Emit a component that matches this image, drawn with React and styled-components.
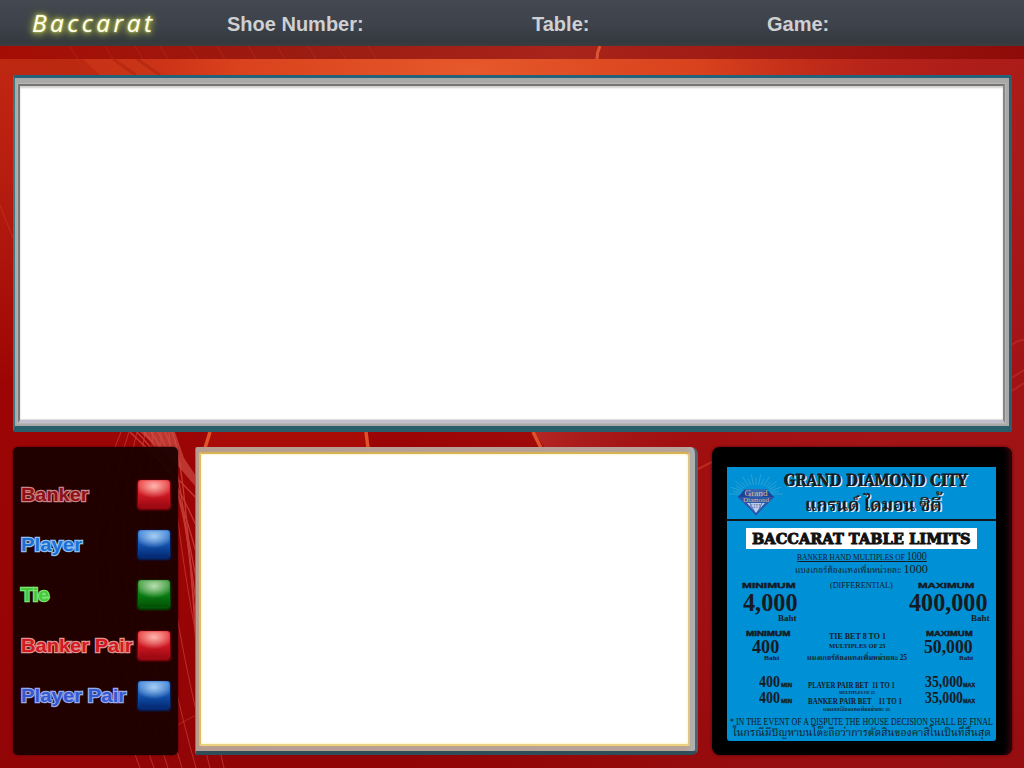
import React, { useLayoutEffect, useRef, useState } from "react";
import styled, { createGlobalStyle } from "styled-components";

const Global = createGlobalStyle`
  * { box-sizing: border-box; }
  body { margin: 0; overflow: hidden; font-family: "Liberation Sans", Arial, sans-serif; }
`;

const serif = `"Liberation Serif", "Noto Serif Thai", "Noto Sans Thai", serif`;
const slab = `"DejaVu Serif", serif`;
const sans = `"Liberation Sans", sans-serif`;

const Screen = styled.div`
  position: relative;
  isolation: isolate;
  width: 1024px;
  height: 768px;
  overflow: hidden;
  display: flex;
  flex-direction: column;
  background: #a00505;
`;

const Backdrop = styled.svg`
  position: absolute;
  inset: 0;
  z-index: -1;
`;

const Header = styled.header`
  flex: none;
  height: 46px;
  display: grid;
  grid-template-columns: 195px 305px 235px 1fr;
  padding-left: 32px;
  background: linear-gradient(#444850, #3d424b 55%, #343a3f 90%, #3c3c3e);
`;

const Logo = styled.div`
  height: 46px;
  color: #fffff0;
  font: italic 500 24.5px/45px "Open Sans", sans-serif;
  letter-spacing: 3.4px;
  text-shadow: 0 0 2px #dce060, 0 0 5px #a5ad4e, 0 1px 7px #9aa648, 0 1px 9px #8c9846, 0 1px 12px #7c8846;
`;

const HeaderLabel = styled.div`
  color: #cfd0d2;
  font: bold 20px/48px ${sans};
`;

const Main = styled.main`
  flex: 1;
  display: flex;
  flex-direction: column;
  gap: 15px;
  padding: 29px 12px 13px 13px;
`;

const Board = styled.section`
  height: 357px;
  border-style: solid;
  border-width: 3px 3px 6px 2px;
  border-color: #24627a #2c6070 #285d6c #397985;
  border-radius: 2px;
  background: #a9a9a8;
  padding: 6px 4px 3px 3px;
`;

const BoardFace = styled.div`
  height: 100%;
  background: #fff;
  border: 2px solid;
  border-width: 2px 2px 3px 2px;
  border-color: #777473 #85878b #c0bdcc #77777d;
  box-shadow: inset 0 2px 2px #d0d0ce, inset 0 -1px 1px #ddd, 0 0 0 1px #b5b5b8;
`;

const Lower = styled.div`
  flex: 1;
  display: grid;
  grid-template-columns: 165px 503px 300px;
  column-gap: 17px;
  & > :last-child { margin-left: -3px; width: 300px; }
`;

const Legend = styled.section`
  height: 308px;
  padding: 22px 8px 0 6px;
  border-radius: 5px;
  background: rgba(25, 0, 0, 0.94);
  box-shadow: 0 0 2px #300;
`;

const LegendRow = styled.div`
  height: 50.2px;
  display: flex;
  align-items: center;
  justify-content: space-between;
`;

const LegendText = styled.div`
  padding-top: 2px;
  color: ${(p) => p.$fill};
  --edge: ${(p) => p.$edge};
`;

const tones = {
  red: ["#ffb6ae", "#ee4444", "#ca1722", "#950710"],
  blue: ["#a6cef5", "#4a8dde", "#104fab", "#03256b"],
  green: ["#b7deb0", "#4da348", "#087a10", "#034c05"],
};

const Lamp = styled.div`
  width: 32px;
  height: 28px;
  flex: none;
  border-radius: 3px;
  background:
    radial-gradient(ellipse 19px 12px at 50% 22%, ${(p) => tones[p.$tone][0]}, transparent),
    linear-gradient(${(p) => tones[p.$tone][1]}, ${(p) => tones[p.$tone][2]} 55%, ${(p) => tones[p.$tone][3]});
  box-shadow: 0 1px 2px 1px ${(p) => tones[p.$tone][3]}, inset 0 0 2px ${(p) => tones[p.$tone][2]};
`;

const Panel = styled.section`
  height: 308px;
  border-style: solid;
  border-width: 0 3px 4px 1px;
  border-color: #5f5557 #56626b #2f4e58 #777;
  border-radius: 2px 7px 6px 2px;
  background: linear-gradient(90deg, #b79d90, #b8a39b 98%, #adb3b5);
  padding: 5px 5px 5px 3px;
`;

const PanelFace = styled.div`
  height: 100%;
  background: #fff;
  border: 2px solid;
  border-color: #d7b254 #dfc38c #ecd280 #e3bb63;
  border-radius: 2px 4px 2px 2px;
  box-shadow: inset 0 0 3px #fff0a0, 0 0 1px #d7b254;
`;

const SignFrame = styled.section`
  height: 308px;
  padding: 20px 16px 14px 15px;
  border-radius: 8px;
  background: #000;
  border: 0 solid #2b0207;
  box-shadow: inset -6px 0 4px -2px #2b0409, 0 0 3px #4a0308;
`;

const Sign = styled.div`
  height: 274px;
  background: #0090d6;
  border-radius: 0 0 3px 3px;
  overflow: hidden;
  color: #171a22;
`;

const SignHead = styled.div`
  height: 54px;
  display: flex;
  border-bottom: 2px solid #151515;
`;

const Emblem = styled.svg`
  flex: none;
  width: 56px;
  height: 50px;
`;

const SignTitle = styled.div`
  padding: 3px 0 0 1px;
`;

const Banner = styled.div`
  width: 231px;
  height: 21px;
  margin: 7px 0 3px 19px;
  padding: 1px 0 0 6px;
  background: #fff;
  color: #111;
`;

const Row = styled.div`
  display: grid;
  grid-template-columns: 80px 100px 89px;
  height: ${(p) => p.$h}px;
`;

const Cell = styled.div`
  padding-top: ${(p) => p.$top || 0}px;
`;

const PairLine = styled.div`
  display: grid;
  grid-template-columns: 81px 117px 1fr;
  height: 16px;
`;

const Amount = styled.div`
  display: flex;
  align-items: flex-start;
  margin-left: ${(p) => p.$left || 0}px;
`;

const FitBox = styled.div`
  width: ${(p) => p.$w}px;
  height: ${(p) => p.$h}px;
  margin-left: ${(p) => p.$x || 0}px;
  margin-top: ${(p) => p.$y || 0}px;
  line-height: ${(p) => p.$h}px;
  font-family: ${(p) => p.$font || serif};
  font-size: ${(p) => p.$size}px;
  font-weight: ${(p) => (p.$bold ? 700 : 400)};
  text-decoration: ${(p) => (p.$line ? "underline" : "none")};
  text-underline-offset: 1px;
  text-decoration-thickness: 1px;
  -webkit-text-stroke: ${(p) => (p.$edged ? "2.4px var(--edge)" : `${p.$heavy || 0}px currentColor`)};
  paint-order: stroke fill;
  text-shadow: ${(p) => (p.$lit ? "1.5px 1px 0 #e8eef4" : "none")};
  white-space: nowrap;
`;

const FitSpan = styled.span`
  display: inline-block;
  line-height: inherit;
  transform-origin: 0 50%;
  text-decoration: inherit;
`;

const Large = styled.span`
  font-size: 11.5px;
`;

/* One line of lettering, condensed or widened to its set width. */
function Fit({ w, h, x, y, size, font, bold, line, heavy, lit, edged, children }) {
  const ref = useRef(null);
  const [scale, setScale] = useState(1);
  useLayoutEffect(() => {
    setScale(w / ref.current.offsetWidth);
  }, [w]);
  return (
    <FitBox $w={w} $h={h} $x={x} $y={y} $size={size} $font={font} $bold={bold} $line={line} $heavy={heavy} $lit={lit} $edged={edged}>
      <FitSpan ref={ref} style={{ transform: `scaleX(${scale})` }}>{children}</FitSpan>
    </FitBox>
  );
}

function Scene() {
  const strands = Array.from({ length: 7 }, (_, i) => i);
  return (
    <Backdrop width="1024" height="768" viewBox="0 0 1024 768">
      <defs>
        <linearGradient id="base" x1="0" y1="0" x2="0" y2="1">
          <stop offset="0" stopColor="#c92a12" />
          <stop offset=".25" stopColor="#b51c10" />
          <stop offset=".5" stopColor="#9d0505" />
          <stop offset="1" stopColor="#960406" />
        </linearGradient>
        <radialGradient id="glow" gradientUnits="userSpaceOnUse" cx="0" cy="0" r="1" gradientTransform="translate(470 70) scale(520 190)">
          <stop offset="0" stopColor="#e6592b" />
          <stop offset=".45" stopColor="#dc451e" stopOpacity=".9" />
          <stop offset="1" stopColor="#b51f12" stopOpacity="0" />
        </radialGradient>
        <linearGradient id="strip">
          <stop offset="0" stopColor="#a50d04" />
          <stop offset=".3" stopColor="#9b1c12" />
          <stop offset=".55" stopColor="#a9241a" />
          <stop offset="1" stopColor="#8e0b09" />
        </linearGradient>
        <linearGradient id="side">
          <stop offset=".4" stopColor="#a91d1d" stopOpacity="0" />
          <stop offset=".85" stopColor="#a61a1f" stopOpacity=".7" />
          <stop offset="1" stopColor="#a2191c" stopOpacity=".7" />
        </linearGradient>
        <linearGradient id="band">
          <stop offset="0" stopColor="#b82e2a" />
          <stop offset="1" stopColor="#a3181c" stopOpacity="0" />
        </linearGradient>
        <linearGradient id="low" x1="0" y1="0" x2="0" y2="1">
          <stop offset="0" stopColor="#8c0508" stopOpacity="0" />
          <stop offset="1" stopColor="#8c0608" stopOpacity=".45" />
        </linearGradient>
      </defs>
      <rect width="1024" height="768" fill="url(#base)" />
      <rect width="1024" height="768" fill="url(#side)" />
      <rect width="1024" height="260" fill="url(#glow)" />
      <rect y="620" width="1024" height="148" fill="url(#low)" />
      <path d="M0 59H82L100 75H0Z" fill="#b92a12" opacity=".75" />
      <path d="M83 59L100 75H170L143 59Z" fill="#c93718" opacity=".6" />
      <path d="M113 59L136 75M137 59L160 75" stroke="#b92a12" strokeWidth="3" />
      <rect y="46" width="1024" height="13" fill="url(#strip)" />
      <g stroke="#b9382b" opacity=".4">
        {[70, 105, 135, 160, 190, 217, 248, 277, 308, 338, 368].map((x) => (
          <path key={x} d={`M${x} 46l8 13`} />
        ))}
      </g>
      <path d="M600 46Q597 52 597 59" stroke="#dd5537" strokeWidth="3" fill="none" />
      <path d="M0 205L14 241" stroke="#cf3a23" opacity=".6" />
      <path d="M210 432H365L368 447H206Z" fill="#b51209" opacity=".5" />
      <path d="M534 432L544 447H712V432Z" fill="url(#band)" opacity=".8" />
      <g fill="none" stroke="#e0522a" strokeWidth="3.5">
        <path d="M210 432L205 448" />
        <path d="M366 432L368 448" />
        <path d="M533 432L541 448" />
      </g>
      <g fill="none" stroke="#d8574c" opacity=".65">
        {strands.map((i) => (
          <path key={i} opacity=".8" d={`M${121 + i * 8} 432C${80 + i * 16} 530 ${92 + i * 17} 640 ${140 + i * 14} 768`} />
        ))}
        {strands.map((i) => (
          <path key={`c${i}`} strokeWidth="1.3" d={`M${130 + i * 7} 432Q${168 + i * 3} ${468 - i} 198 ${500 + i * 30}`} />
        ))}
        <path d="M170 729L198 714" opacity=".6" />
      </g>
      <path d="M140 432H175L184 458 196 476V487L178 466Z" fill="#d4564c" opacity=".6" />
      <path d="M690 473L716 460" fill="none" stroke="#d6402f" strokeWidth="2" opacity=".55" />
      <path d="M1010 346Q1018 340 1024 340M1010 379L1024 370M1010 392L1024 383" fill="none" stroke="#c8382c" strokeWidth="2" opacity=".5" />
    </Backdrop>
  );
}

function Diamond() {
  const rays = Array.from({ length: 19 }, (_, i) => {
    const a = Math.PI * (1 + i / 18);
    const outer = i % 2 ? 23 : 27;
    return `M${29 + Math.cos(a) * 15} ${27 + Math.sin(a) * 9}L${29 + Math.cos(a) * outer} ${27 + Math.sin(a) * (outer - 7)}`;
  }).join("");
  return (
    <Emblem viewBox="0 0 56 50">
      <path d={rays} stroke="#5fb2cf" strokeWidth=".5" />
      <path d="M18 22H39L47 30 29 48 11 30Z" fill="#1f4196" />
      <path d="M18 22L23 31 29 48 35 31 39 22" fill="#3a64b0" />
      <path d="M11 30H47L29 48Z" fill="#2c58ac" />
      <path d="M20 36H38L29 46Z" fill="#b9cff0" />
      <path d="M11 30L22 34 29 48 36 34 47 30" fill="none" stroke="#284da6" strokeWidth=".7" />
      <g fill="#d8bb92" fontFamily="Liberation Serif" textAnchor="middle">
        <text x="29" y="29" fontSize="8.5" textLength="23" lengthAdjust="spacingAndGlyphs">Grand</text>
        <text x="29" y="35" fontSize="7" textLength="26" lengthAdjust="spacingAndGlyphs">Diamond</text>
        <text x="29" y="40.5" fontSize="5.5" textLength="12" lengthAdjust="spacingAndGlyphs" fill="#56658d">CITY</text>
      </g>
    </Emblem>
  );
}

const legend = [
  ["Banker", "red", "#8e1019", "#c98583", 67],
  ["Player", "blue", "#1c70d4", "#8fc0ee", 61],
  ["Tie", "green", "#48c83e", "#7ce66f", 28],
  ["Banker Pair", "red", "#d21924", "#dd9391", 112],
  ["Player Pair", "blue", "#3658cf", "#98abe8", 105],
];

export default function App() {
  return (
    <Screen>
      <Global />
      <Scene />
      <Header>
        <Logo>Baccarat</Logo>
        <HeaderLabel>Shoe Number:</HeaderLabel>
        <HeaderLabel>Table:</HeaderLabel>
        <HeaderLabel>Game:</HeaderLabel>
      </Header>
      <Main>
        <Board><BoardFace /></Board>
        <Lower>
          <Legend>
            {legend.map(([name, tone, fill, edge, width]) => (
              <LegendRow key={name}>
                <LegendText $fill={fill} $edge={edge}>
                  <Fit w={width} h={24} x={2} size={19} font={sans} bold edged>{name}</Fit>
                </LegendText>
                <Lamp $tone={tone} />
              </LegendRow>
            ))}
          </Legend>
          <Panel><PanelFace /></Panel>
          <SignFrame>
            <Sign>
              <SignHead>
                <Diamond />
                <SignTitle>
                  <Fit w={183} h={20} y={1} size={16.5} font={slab} bold heavy={1.1} lit>GRAND DIAMOND CITY</Fit>
                  <Fit w={137} h={24} x={21} y={2} size={18.5} bold heavy={0.3} lit>แกรนด์ ไดมอน ซิตี้</Fit>
                </SignTitle>
              </SignHead>
              <Banner>
                <Fit w={219} h={20} size={14} font={slab} bold heavy={0.9}>BACCARAT TABLE LIMITS</Fit>
              </Banner>
              <Fit w={130} h={11} x={70} y={-1} size={8.5} line>BANKER HAND MULTIPLES OF <Large>1000</Large></Fit>
              <Fit w={133} h={13} x={68} y={1} size={8}>แบงเกอร์ต้องแทงเพิ่มหน่วยละ <Large>1000</Large></Fit>
              <Row $h={51}>
                <Cell $top={5}>
                  <Fit w={54} h={9} x={15} size={7.5} font={sans} bold heavy={0.4}>MINIMUM</Fit>
                  <Fit w={55} h={23} x={16} y={1} size={26} bold>4,000</Fit>
                  <Fit w={19} h={6} x={51} y={1} size={9} bold>Baht</Fit>
                </Cell>
                <Cell $top={5}>
                  <Fit w={63} h={9} x={23} size={8}>(DIFFERENTIAL)</Fit>
                </Cell>
                <Cell $top={5}>
                  <Fit w={57} h={9} x={11} size={7.5} font={sans} bold heavy={0.4}>MAXIMUM</Fit>
                  <Fit w={79} h={23} x={2} y={1} size={26} bold>400,000</Fit>
                  <Fit w={19} h={6} x={64} y={1} size={9} bold>Baht</Fit>
                </Cell>
              </Row>
              <Row $h={47}>
                <Cell $top={3}>
                  <Fit w={44} h={8} x={19} size={6.5} font={sans} bold heavy={0.4}>MINIMUM</Fit>
                  <Fit w={27} h={18} x={25} size={19.5} bold>400</Fit>
                  <Fit w={15} h={5} x={37} size={7} bold>Baht</Fit>
                </Cell>
                <Cell $top={5}>
                  <Fit w={57} h={10} x={22} size={8} bold>TIE BET 8 TO 1</Fit>
                  <Fit w={57} h={9} x={22} size={7} bold>MULTIPLES OF 25</Fit>
                  <Fit w={100} h={12} x={0} y={1} size={7.5} bold>แบงเกอร์ต้องแทงเพิ่มหน่วยละ 25</Fit>
                </Cell>
                <Cell $top={3}>
                  <Fit w={47} h={8} x={19} size={6.5} font={sans} bold heavy={0.4}>MAXIMUM</Fit>
                  <Fit w={49} h={18} x={17} size={19.5} bold>50,000</Fit>
                  <Fit w={14} h={5} x={52} size={7} bold>Baht</Fit>
                </Cell>
              </Row>
              {["PLAYER", "BANKER"].map((side, i) => (
                <PairLine key={side}>
                  <Amount $left={32}>
                    <Fit w={21} h={16} size={16} bold>400</Fit>
                    <Fit w={11} h={9} x={1} y={7} size={5.5} font={sans} bold heavy={0.3}>MIN</Fit>
                  </Amount>
                  <Cell $top={8}>
                    <Fit w={i ? 94 : 87} h={7} size={8} bold>{side} PAIR BET &nbsp;{i ? "\u00a0\u00a0" : ""}11 TO 1</Fit>
                    <Fit w={i ? 67 : 36} h={8} x={i ? 15 : 31} y={i} size={4.5} bold>
                      {i ? "แบงเกอร์ต้องแทงเพิ่มหน่วยละ 25" : "MULTIPLES OF 25"}
                    </Fit>
                  </Cell>
                  <Amount>
                    <Fit w={38} h={16} size={16} bold>35,000</Fit>
                    <Fit w={12} h={9} y={7} size={5.5} font={sans} bold heavy={0.3}>MAX</Fit>
                  </Amount>
                </PairLine>
              ))}
              <Cell $top={10}>
                <Fit w={263} h={11} x={3} size={10}>* IN THE EVENT OF A DISPUTE THE HOUSE DECISION SHALL BE FINAL</Fit>
                <Fit w={258} h={12} x={6} size={10}>ในกรณีมีปัญหาบนโต๊ะถือว่าการตัดสินของคาสิโนเป็นที่สิ้นสุด</Fit>
              </Cell>
            </Sign>
          </SignFrame>
        </Lower>
      </Main>
    </Screen>
  );
}
